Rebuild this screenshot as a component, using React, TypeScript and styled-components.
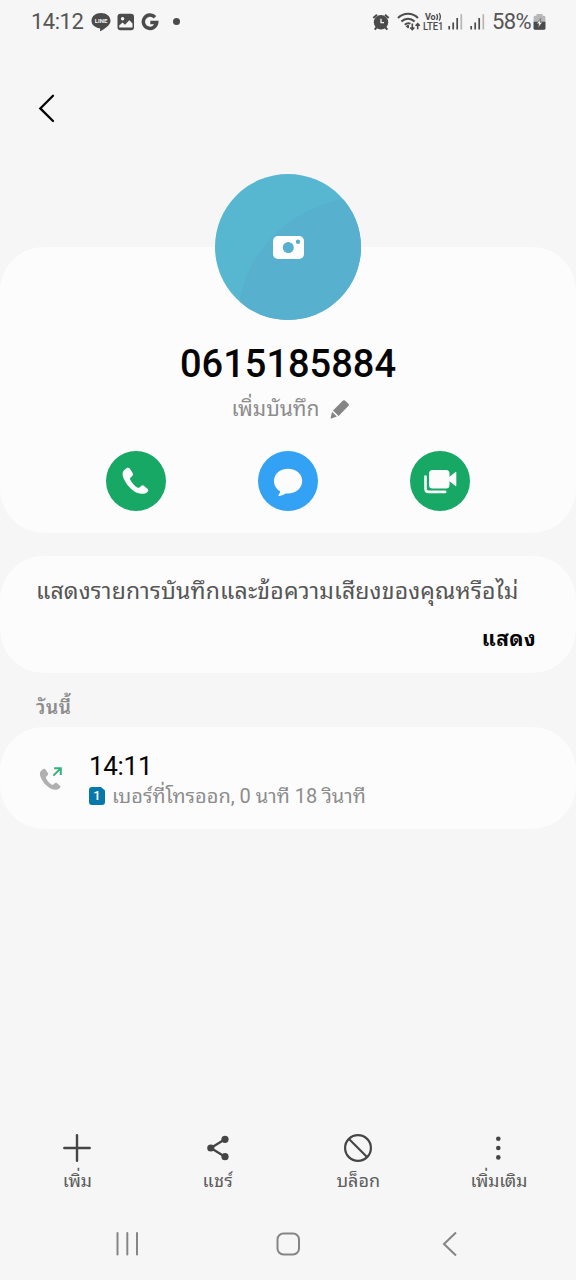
import React from "react";
import styled, { createGlobalStyle } from "styled-components";

const Global = createGlobalStyle`
  * { box-sizing: border-box; }
  body { margin: 0; background: #f6f6f6; font-family: Roboto, "Noto Sans Thai Looped", "Noto Looped Thai", Loma, Garuda, Waree, sans-serif; }
  svg { display: block; flex: none; }
`;

const Screen = styled.div`
  width: 576px;
  height: 1280px;
  display: flex;
  flex-direction: column;
  background: #f6f6f6;
  overflow: hidden;
`;

const StatusBar = styled.header`
  height: 44px;
  padding: 0 30px 0 31px;
  display: flex;
  align-items: center;
  justify-content: space-between;
`;

const StatusGroup = styled.div`
  display: flex;
  align-items: center;
`;

const StatusText = styled.span<{ $spacing: number }>`
  font-size: 22px;
  line-height: 26px;
  letter-spacing: ${(p) => p.$spacing}px;
  color: #555;
  white-space: nowrap;
`;

const TopBar = styled.div`
  height: 203px;
  padding: 50px 0 0 34px;
`;

const Card = styled.section<{ $height: number }>`
  flex: none;
  height: ${(p) => p.$height}px;
  border-radius: 44px;
  background: #fcfcfc;
`;

const ContactCard = styled(Card)`
  display: flex;
  flex-direction: column;
  align-items: center;
`;

const Avatar = styled.div`
  width: 146px;
  height: 146px;
  margin-top: -73px;
  flex: none;
`;

const PhoneNumber = styled.h1`
  margin: 21px 0 0;
  font-size: 38px;
  line-height: 46px;
  font-weight: 500;
  color: #050505;
`;

const NoteRow = styled.div`
  height: 30px;
  margin-top: 7px;
  display: flex;
  align-items: center;
  gap: 10px;
  padding-left: 5px;
`;

const Label = styled.span<{ $size: number; $color: string; $weight?: number; $spacing?: number }>`
  font-size: ${(p) => p.$size}px;
  line-height: 28px;
  font-weight: ${(p) => p.$weight ?? 400};
  letter-spacing: ${(p) => p.$spacing ?? 0}px;
  color: ${(p) => p.$color};
  white-space: nowrap;
`;

const Actions = styled.div`
  margin-top: 27px;
  display: flex;
  gap: 92px;
`;

const RoundButton = styled.button<{ $color: string }>`
  width: 60px;
  height: 60px;
  padding: 0;
  border: 0;
  border-radius: 50%;
  background: ${(p) => p.$color};
`;

const PromptCard = styled(Card)`
  margin-top: 23px;
  padding: 22px 40px 0 36px;
  display: flex;
  flex-direction: column;
  gap: 19px;
`;

const PromptAction = styled.div`
  display: flex;
  justify-content: flex-end;
`;

const DayHeading = styled.div`
  height: 54px;
  padding: 21px 0 0 36px;
`;

const CallCard = styled(Card)`
  display: flex;
  padding: 23px 36px 0;
`;

const CallIcon = styled.div`
  width: 53px;
  padding: 16px 0 0 2px;
`;

const CallInfo = styled.div`
  display: flex;
  flex-direction: column;
`;

const CallTime = styled.span`
  font-size: 26px;
  line-height: 32px;
  letter-spacing: -0.3px;
  color: #050505;
`;

const CallDetail = styled.div`
  display: flex;
  align-items: center;
  gap: 7px;
`;

const SimBadge = styled.span`
  width: 16px;
  height: 18px;
  border-radius: 3px;
  clip-path: polygon(0 0, 75% 0, 100% 20%, 100% 100%, 0 100%);
  background: #0878aa;
  color: #fff;
  font-size: 13px;
  font-weight: 500;
  line-height: 18px;
  text-align: center;
`;

const Toolbar = styled.nav`
  margin-top: auto;
  padding: 0 7px;
  height: 74px;
  flex: none;
  display: grid;
  grid-template-columns: repeat(4, 1fr);
`;

const ToolItem = styled.div`
  display: flex;
  flex-direction: column;
  align-items: center;
  gap: 4px;
`;

const SystemNav = styled.footer`
  height: 73px;
  padding: 0 109px 0 109px;
  display: flex;
  align-items: center;
  justify-content: space-between;
  flex: none;
`;

const handset = "M5.6 1.8 3.3 3.5C.8 5.4.8 8.8 2.6 12.6 5.2 18.2 10 23.8 15.6 26.4c3.7 1.7 8.1 1.7 10.8-1 .9-.9.8-2.1-.2-3l-3.4-2.8c-.9-.8-2.1-.7-3 .1l-1.6 1.4c-.7.6-1.5.6-2.3.1-3-2-5.4-4.8-6.9-7.8-.4-.8-.3-1.6.4-2.2L11 9.7c.8-.8 1-1.9.3-2.9L8.5 2.3c-.7-1-1.9-1.2-2.9-.5Z";

const LineIcon = () => (
  <svg width="20" height="20" viewBox="0 0 20 20">
    <path fill="#4b4b4b" d="M10 1C4.6 1 .5 4.4.5 8.7c0 3.8 3.4 6.9 8 7.5.8.2.7.7.6 1.5l-.1 1c0 .4.3.6.7.3 3.7-2.1 9.8-5.7 9.800-10.300C19.500 4.400 15.400 1 10 1Z" />
    <text x="3.800" y="10.900" fontFamily="Roboto" fontWeight="700" fontSize="6" textLength="12.400" lengthAdjust="spacingAndGlyphs" fill="#f6f6f6">LINE</text>
  </svg>
);

const GalleryIcon = () => (
  <svg width="18" height="18" viewBox="0 0 18 18">
    <rect x=".5" y=".8" width="16.500" height="16.400" rx="3" fill="#4b4b4b" />
    <circle cx="5.600" cy="5.700" r="1.700" fill="#f6f6f6" />
    <path d="M2.200 14.500V12.500L5.500 9.600 8 11.800 12.300 7.300 15.500 10.500V14.500Z" fill="#f6f6f6" />
  </svg>
);

const GoogleIcon = () => (
  <svg width="18" height="18" viewBox="0 0 18 18" fill="none" stroke="#4b4b4b" strokeWidth="3.500">
    <path d="M14 4.200A6.700 6.700 0 1 0 15.700 9.600H9.300" />
  </svg>
);

const AlarmIcon = () => (
  <svg width="18" height="18" viewBox="0 0 18 18">
    <circle cx="9" cy="9.300" r="7.200" fill="#4b4b4b" />
    <path d="M1.300 5 5 1.800M16.700 5 13 1.800M4.500 14.500 2.700 16.700M13.500 14.500l1.800 2.200" stroke="#4b4b4b" strokeWidth="2" fill="none" />
    <path d="M9 5.800v3.900h3" stroke="#f6f6f6" strokeWidth="1.300" fill="none" />
  </svg>
);

const WifiIcon = () => (
  <svg width="25" height="20" viewBox="0 0 25 20" fill="none" stroke="#4b4b4b" strokeWidth="2">
    <path d="M1 6C6.500.4 15.500.4 21 6M4.400 9.500c3.800-3.800 9.400-3.800 13.200 0M7.800 12.800c1.800-1.700 3.800-2 5.700-1.100" />
    <path d="M8.700 14.300 11 12.700l1 .5v2.600l-1 .8Z" fill="#4b4b4b" stroke="none" />
    <path d="M15.300 11.500v6M13.200 15.500l2.100 2.200 2.100-2.200M20.700 17.300v-5M18.600 13.800l2.100-2.200 2.100 2.200" strokeWidth="1.600" />
  </svg>
);

const VolteIcon = () => (
  <svg width="21" height="20" viewBox="0 0 21 20" fontFamily="Roboto" fontWeight="700" fill="#4b4b4b">
    <text x="2" y="8.200" fontSize="9" textLength="10.500">Vo</text>
    <path d="M13.600 2q1.800 2.800 0 6M16.200 1.200q2.300 3.500 0 7.400" fill="none" stroke="#4b4b4b" strokeWidth="1.300" />
    <text x="0" y="18" fontSize="10.200" fontWeight="500" textLength="20.500" lengthAdjust="spacingAndGlyphs">LTE1</text>
  </svg>
);

const SignalIcon = () => (
  <svg width="16" height="18" viewBox="0 0 16 18">
    <path d="M1.200 13v3.500M5.200 9.500v7M9.200 5v11.500" stroke="#4b4b4b" strokeWidth="1.700" />
    <path d="M13.300 1.200v15.300" stroke="#b5b5b5" strokeWidth="1.700" />
  </svg>
);

const BatteryIcon = () => (
  <svg width="13" height="18" viewBox="0 0 13 18">
    <path d="M3.500 1h6v1.800H11q1.400 0 1.400 1.500v11q0 1.400-1.400 1.400H2Q.6 16.700.6 15.300v-11q0-1.500 1.400-1.500h1.500Z" fill="#b7b7b7" />
    <path d="M.6 8.800h11.800v6.500q0 1.400-1.400 1.400H2Q.6 16.700.6 15.300Z" fill="#4b4b4b" />
    <path d="M7.800 5.500 3.600 10.700h2.200L5.100 14.700l4.400-5.400H7Z" fill="#f6f6f6" stroke="#4b4b4b" strokeWidth=".6" />
  </svg>
);

const AvatarArt = () => (
  <svg width="146" height="146" viewBox="0 0 146 146">
    <defs><clipPath id="disc"><circle cx="73" cy="73" r="73" /></clipPath></defs>
    <g clipPath="url(#disc)">
      <rect width="146" height="146" fill="#57b6d0" />
      <path d="M22 146C25 84 68 40 122 26L146 22V146Z" fill="#57b0cd" />
    </g>
    <rect x="58" y="62" width="31" height="23" rx="5" fill="#fff" />
    <circle cx="73.300" cy="73.500" r="5.500" fill="#57b0cd" />
    <circle cx="83" cy="67.800" r="2.200" fill="#57b0cd" />
  </svg>
);

const PencilIcon = () => (
  <svg width="20" height="20" viewBox="0 0 20 20" fill="#858585">
    <path d="m3 11.500 10-9.900q1-.9 2 0l3.600 3.300q.9.900 0 1.900L8.600 17Z" />
    <path d="M2.100 12.800 6.900 17.600 1.300 19.400Q.5 19.500.6 18.700Z" />
  </svg>
);

const CallGlyph = () => (
  <svg width="60" height="60" viewBox="0 0 60 60"><path transform="translate(15.300 15.300)" d={handset} fill="#fcfcfc" /></svg>
);

const MessageGlyph = () => (
  <svg width="60" height="60" viewBox="0 0 60 60">
    <path d="M30 17.700c-8.200 0-14 5.300-14 12.200 0 4.200 2.200 8 5.700 10.200.5.300.5.800.2 1.300l-1.300 2.500c-.4.800 0 1.200.8 1 2.500-.5 4.700-1.300 6.300-2.500 9.400.9 16.500-5.100 16.500-12.500 0-7-6.100-12.200-14.200-12.200Z" fill="#fcfcfc" />
  </svg>
);

const VideoGlyph = () => (
  <svg width="60" height="60" viewBox="0 0 60 60">
    <rect x="19" y="19" width="20.500" height="18.500" rx="3.500" fill="#fcfcfc" />
    <path d="m38.500 26.500 7-5.500q.8-.5.800.5v13q0 1-.8.500l-7-5.500Z" fill="#fcfcfc" />
    <path d="M15.500 25.500v12.200q0 3.200 3.200 3.200h16.500" fill="none" stroke="#fcfcfc" strokeWidth="2.600" strokeLinecap="round" />
  </svg>
);

const OutgoingIcon = () => (
  <svg width="26" height="26" viewBox="0 0 26 26">
    <path transform="translate(.8 1.600) scale(.8)" d={handset} fill="#b0b0b0" />
    <path d="M15.400 9.600 22.100 2.900M16.100 2.300h6.700v6.700" fill="none" stroke="#35b07c" strokeWidth="2" />
  </svg>
);

const AddIcon = () => (
  <svg width="30" height="30" viewBox="0 0 30 30"><path d="M15 2.300v25.400M2.300 15h25.400" stroke="#454545" strokeWidth="2.400" strokeLinecap="round" /></svg>
);

const ShareIcon = () => (
  <svg width="30" height="30" viewBox="0 0 30 30">
    <path d="M22 6.300 7.800 15 22 23.700" fill="none" stroke="#454545" strokeWidth="2.300" />
    <g fill="#454545"><circle cx="22" cy="6.300" r="3.600" /><circle cx="7.800" cy="15" r="3.600" /><circle cx="22" cy="23.700" r="3.600" /></g>
  </svg>
);

const BlockIcon = () => (
  <svg width="30" height="30" viewBox="0 0 30 30" fill="none" stroke="#454545" strokeWidth="2.200">
    <circle cx="15" cy="15" r="12.900" /><path d="m6 6 18 18" />
  </svg>
);

const MoreIcon = () => (
  <svg width="30" height="30" viewBox="0 0 30 30" fill="#454545"><circle cx="14.300" cy="5.800" r="2.300" /><circle cx="14.300" cy="15" r="2.300" /><circle cx="14.300" cy="24.400" r="2.300" /></svg>
);

const tools = [
  { label: "เพิ่ม", spacing: -0.3, Icon: AddIcon },
  { label: "แชร์", spacing: 0.3, Icon: ShareIcon },
  { label: "บล็อก", spacing: 0, Icon: BlockIcon },
  { label: "เพิ่มเติม", spacing: -0.4, Icon: MoreIcon },
];

const Spacer = styled.span<{ $w: number }>`
  width: ${(p) => p.$w}px;
  flex: none;
`;

const Dot = styled.span`
  width: 7px;
  height: 7px;
  margin-bottom: 2px;
  border-radius: 50%;
  background: #4b4b4b;
`;

export default function App() {
  return (
    <Screen>
      <Global />
      <StatusBar>
        <StatusGroup>
          <StatusText $spacing={-0.5}>14:12</StatusText>
          <Spacer $w={8} /><LineIcon /><Spacer $w={6} /><GalleryIcon />
          <Spacer $w={6} /><GoogleIcon /><Spacer $w={14} /><Dot />
        </StatusGroup>
        <StatusGroup>
          <AlarmIcon /><Spacer $w={7} /><WifiIcon /><Spacer $w={1} /><VolteIcon />
          <Spacer $w={4} /><SignalIcon /><Spacer $w={6} /><SignalIcon /><Spacer $w={6} />
          <StatusText $spacing={-0.6}>58%</StatusText><Spacer $w={2} /><BatteryIcon />
        </StatusGroup>
      </StatusBar>
      <TopBar>
        <svg width="26" height="30" viewBox="0 0 26 30"><path d="M19 1.800 6.300 14.400 19 27" fill="none" stroke="#050505" strokeWidth="2.300" strokeLinecap="round" /></svg>
      </TopBar>
      <ContactCard $height={286}>
        <Avatar><AvatarArt /></Avatar>
        <PhoneNumber>0615185884</PhoneNumber>
        <NoteRow><Label $size={21} $color="#8c8c8c">เพิ่มบันทึก</Label><PencilIcon /></NoteRow>
        <Actions>
          <RoundButton $color="#17a866"><CallGlyph /></RoundButton>
          <RoundButton $color="#33a2f4"><MessageGlyph /></RoundButton>
          <RoundButton $color="#17a866"><VideoGlyph /></RoundButton>
        </Actions>
      </ContactCard>
      <PromptCard $height={117}>
        <Label $size={23} $color="#555" $spacing={0.17}>แสดงรายการบันทึกและข้อความเสียงของคุณหรือไม่</Label>
        <PromptAction><Label $size={21} $color="#050505" $weight={700} $spacing={0.4}>แสดง</Label></PromptAction>
      </PromptCard>
      <DayHeading><Label $size={19} $color="#8c8c8c" $weight={600} $spacing={0.6}>วันนี้</Label></DayHeading>
      <CallCard $height={102}>
        <CallIcon><OutgoingIcon /></CallIcon>
        <CallInfo>
          <CallTime>14:11</CallTime>
          <CallDetail><SimBadge>1</SimBadge><Label $size={20} $color="#8c8c8c">เบอร์ที่โทรออก, 0 นาที 18 วินาที</Label></CallDetail>
        </CallInfo>
      </CallCard>
      <Toolbar>
        {tools.map(({ label, spacing, Icon }) => (
          <ToolItem key={label}><Icon /><Label $size={18} $color="#5c5c5c" $spacing={spacing}>{label}</Label></ToolItem>
        ))}
      </Toolbar>
      <SystemNav>
        <svg width="36" height="30" viewBox="0 0 36 30"><path d="M8.500 4v21.500M18.300 4v21.500M28 4v21.500" stroke="#858585" strokeWidth="2" strokeLinecap="round" /></svg>
        <svg width="30" height="30" viewBox="0 0 30 30"><rect x="4.500" y="4.500" width="21.500" height="21" rx="6" fill="none" stroke="#858585" strokeWidth="2" /></svg>
        <svg width="36" height="30" viewBox="0 0 36 30"><path d="M25 3.500 13 15l12 11.500" fill="none" stroke="#858585" strokeWidth="2" /></svg>
      </SystemNav>
    </Screen>
  );
}
